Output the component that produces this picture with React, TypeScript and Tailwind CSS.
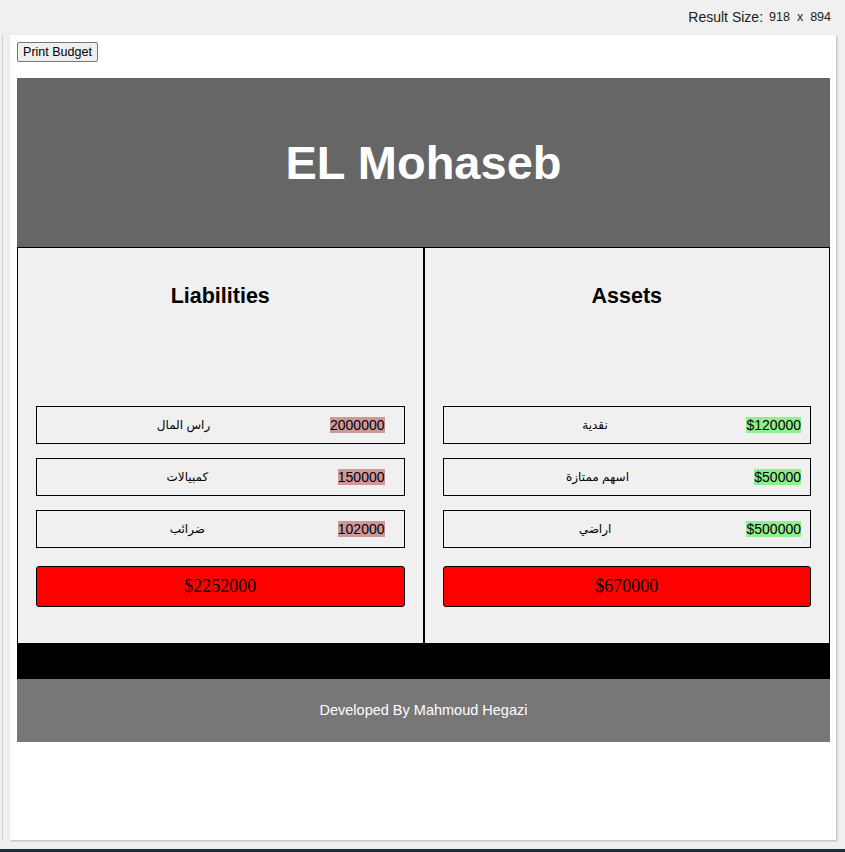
import React from "react";

const liabilities = [
  { label: "راس المال", amount: "2000000" },
  { label: "كمبيالات", amount: "150000" },
  { label: "ضرائب", amount: "102000" },
];

const assets = [
  { label: "نقدية", amount: "$120000" },
  { label: "اسهم ممتازة", amount: "$50000" },
  { label: "اراضي", amount: "$500000" },
];

type Row = { label: string; amount: string };

function Column({
  title,
  rows,
  total,
  chip,
  pad,
}: {
  title: string;
  rows: Row[];
  total: string;
  chip: string;
  pad: string;
}) {
  return (
    <div className="border border-black bg-[#f0f0f0] flex flex-col">
      <h2 className="mt-[36px] h-[24px] leading-[24px] text-center text-[21.5px] font-bold text-black">
        {title}
      </h2>
      <div className="mt-[98px] mx-[18px] flex flex-col gap-[14px]">
        {rows.map((r, i) => (
          <div key={i} className="h-[38px] border border-black flex items-center">
            <div className="w-[308px] text-center text-[12px] text-black" dir="rtl">
              {r.label}
            </div>
            <div className={`flex-1 text-right ${pad}`}>
              <span className={`${chip} text-[14px] leading-[16px] text-black`}>{r.amount}</span>
            </div>
          </div>
        ))}
      </div>
      <div className="mt-[18px] mb-[36px] mx-[18px] h-[41px] bg-[#ff0000] border border-black rounded-[3px] flex items-center justify-center font-['Liberation_Serif',serif] text-[18px] text-black">
        {total}
      </div>
    </div>
  );
}

export default function App() {
  return (
    <div className="w-[845px] h-[852px] bg-[#f0f0f0] relative overflow-hidden font-['Liberation_Sans','DejaVu_Sans',sans-serif]">
      <div className="h-[35px] flex items-center justify-end pr-[14px] text-[14px] text-[#222]">
        <span>Result Size:</span>
        <span className="ml-[6px] text-[12.5px]">918</span>
        <span className="mx-[7px] text-[12.5px]">x</span>
        <span className="text-[12.5px]">894</span>
      </div>
      <div className="absolute left-[2px] top-[35px] w-px h-[806px] bg-[#d0d0d0]" />
      <div className="ml-[10px] w-[826px] h-[805px] bg-white shadow-[1px_1px_2px_rgba(0,0,0,0.25)] pl-[7px] pr-[6px] pt-[7px]">
        <button className="block w-[81px] h-[20px] text-[12.5px] leading-none bg-[#efefef] border border-[#767676] rounded-[2px] text-black">
          Print Budget
        </button>
        <div className="mt-[16px]">
          <div className="h-[169px] bg-[#666666] flex items-center justify-center">
            <h1 className="text-white font-bold text-[47px] leading-none">EL Mohaseb</h1>
          </div>
          <div className="grid grid-cols-2">
            <Column title="Liabilities" rows={liabilities} total="$2252000" chip="bg-[#cc9999]" pad="pr-[19px]" />
            <Column title="Assets" rows={assets} total="$670000" chip="bg-[#90ee90]" pad="pr-[9px]" />
          </div>
          <div className="h-[35px] bg-black" />
          <div className="h-[63px] bg-[#777777] flex items-center justify-center text-white text-[14.5px]">
            Developed By Mahmoud Hegazi
          </div>
        </div>
      </div>
      <div className="absolute left-0 bottom-0 w-full h-[3px] bg-[#1f2a3a]" />
    </div>
  );
}
